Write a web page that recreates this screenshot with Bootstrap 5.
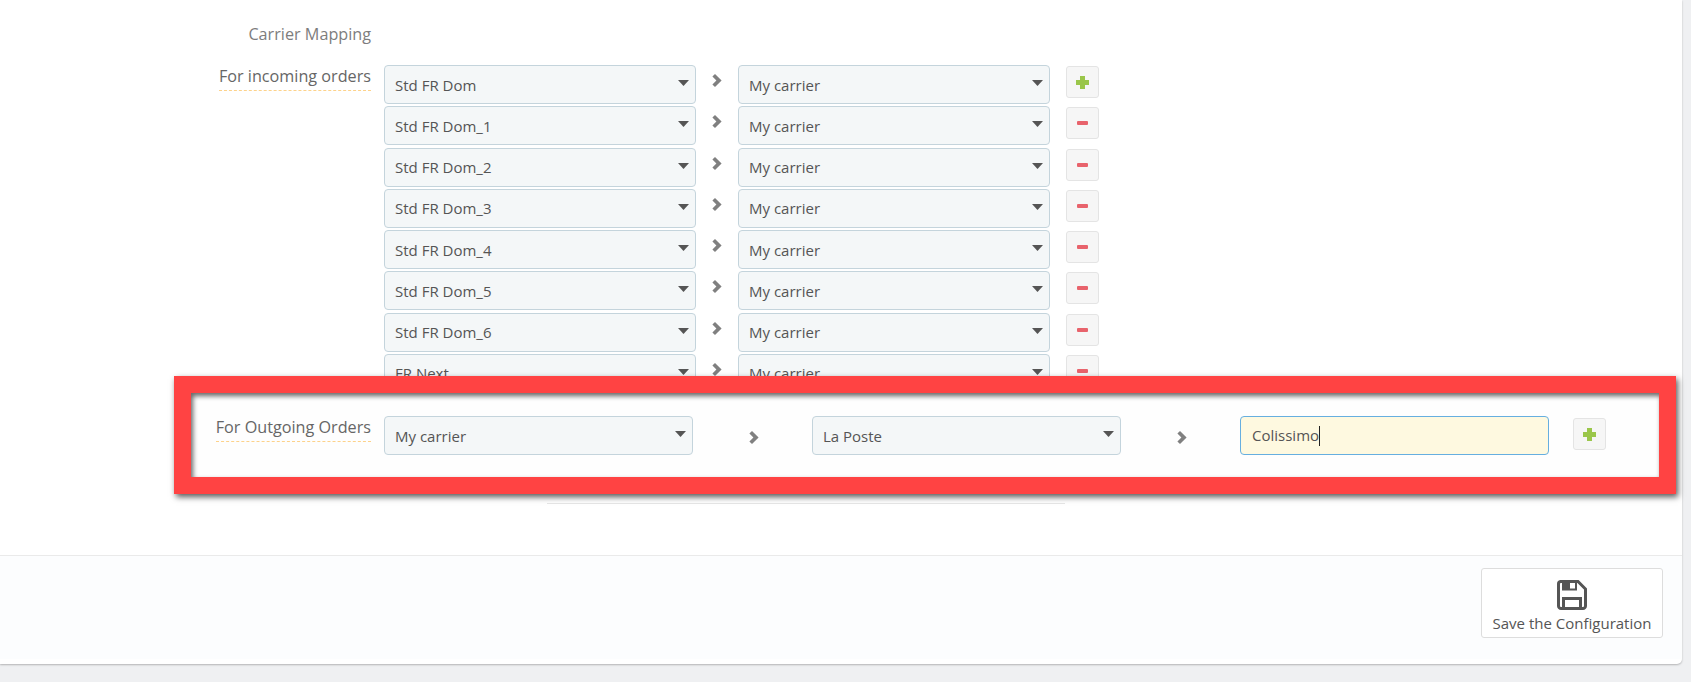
<!DOCTYPE html>
<html lang="en">
<head>
<meta charset="utf-8">
<title>Carrier Mapping</title>
<link href="https://cdn.jsdelivr.net/npm/bootstrap@5.3.0/dist/css/bootstrap.min.css" rel="stylesheet">
<style>
html,body{height:682px;overflow:hidden}
body{background:#eff0f2;font-family:"Open Sans","Noto Sans",sans-serif;font-size:15px;color:#555;position:relative}
.sheet{width:1682px;height:664px;background:#fff;border-bottom-right-radius:5px;box-shadow:0 1px 2px rgba(0,0,0,.25);overflow:hidden;display:flex;flex-direction:column}
.sheet-body{height:555px;padding-top:23px;flex:none}
.head-row{height:42px;display:flex}
.lbl-col{width:371px;text-align:right;flex:none;font-size:16.2px;line-height:20px;padding-top:1px}
.lbl-head{color:#7d7d7d}
.lbl-help{color:#666;border-bottom:1px dashed #fdd28a;padding-bottom:4px;display:inline-block}
.map-row{height:41.28px;display:flex;align-items:flex-start}
.map-list{padding-left:13px;flex:none}
.sel{height:39px;width:312px;border:1px solid #c4d4dc;border-radius:4px;background-color:#f4f7f8;background-image:url("data:image/svg+xml,%3Csvg xmlns='http://www.w3.org/2000/svg' width='11' height='6'%3E%3Cpath d='M0 0h11L5.500 6z' fill='%23555'/%3E%3C/svg%3E");background-repeat:no-repeat;background-position:right 6px top 14px;background-size:11px 6px;color:#555;font-size:15px;padding:0 20px 0 10px;box-shadow:none;font-family:inherit;line-height:20px;-webkit-appearance:none;appearance:none}
.sel:focus{box-shadow:none;outline:0}
.chev{width:42px;flex:none;display:flex;justify-content:center;padding-top:9px;padding-right:1px}
.chev svg,.tool svg{display:block}
.tool{width:33px;height:32px;background:#f6f6f6;border:1px solid #e4e4e4;border-radius:3px;margin-left:16px;margin-top:1px;padding:0;display:flex;align-items:center;justify-content:center;flex:none}
.rule-line{height:1px;background:#e6e6e6;width:518px;margin-left:547px}
.rule-wrap{padding-top:108px}
.sheet-foot{height:91px;flex:none;background:#fcfdfe;border-top:1px solid #eaeaea;display:flex;justify-content:flex-end;padding:12px 19px 0 0;box-sizing:content-box}
.save-btn{width:182px;height:70px;background:#fff;border:1px solid #ddd;border-radius:3px;display:flex;flex-direction:column;align-items:center;font-size:15px;color:#555;line-height:20px;padding:11px 0 0}
.save-btn svg{display:block;margin-bottom:3px}
.callout{position:absolute;left:174px;top:376px;width:1502px;height:118px;border:17px solid #ff4343;background:#fefefe;box-shadow:2px 3px 6px rgba(0,0,0,.65),inset 2px 3px 5px rgba(0,0,0,.6);display:flex;align-items:flex-start;padding-top:23px}
.lbl-out{width:180px;flex:none;text-align:right;font-size:16.2px;line-height:20px;color:#666;padding-top:1px}
.lbl-out span{border-bottom:1px dashed #fdd28a;padding-bottom:4px;display:inline-block}
.callout .sel-o{width:309px;margin-left:13px}
.callout .sel-p{width:309px}
.gap-w{width:119px;flex:none;display:flex;justify-content:center;padding:15px 0 0 3px}
.txt-in{height:39px;width:309px;border:1px solid #66afe0;border-radius:4px;background:#fef9e0;color:#555;font-size:15px;padding:0 11px;display:flex;align-items:center}
.caret-bar{display:inline-block;width:1px;height:20px;background:#222;flex:none}
.callout .tool{margin-left:24px;margin-top:2px}
</style>
</head>
<body>
<div class="sheet">
  <div class="sheet-body">
    <div class="head-row"><div class="lbl-col lbl-head">Carrier Mapping</div></div>
    <div class="d-flex">
      <div class="lbl-col"><span class="lbl-help">For incoming orders</span></div>
      <div class="map-list">
        <div class="map-row"><select class="sel"><option>Std FR Dom</option></select><div class="chev"><svg width="10" height="13" viewBox="0 0 10 13"><path d="M3 0 9.600 6.500 3 13 .4 10.400 4.400 6.500.4 2.600z" fill="#808080"/></svg></div><select class="sel"><option>My carrier</option></select><button class="tool" type="button" aria-label="Add"><svg width="13" height="13" viewBox="0 0 13 13"><path d="M4 0h5v4h4v5H9v4H4V9H0V4h4z" fill="#9ac64a"/></svg></button></div>
        <div class="map-row"><select class="sel"><option>Std FR Dom_1</option></select><div class="chev"><svg width="10" height="13" viewBox="0 0 10 13"><path d="M3 0 9.600 6.500 3 13 .4 10.400 4.400 6.500.4 2.600z" fill="#808080"/></svg></div><select class="sel"><option>My carrier</option></select><button class="tool" type="button" aria-label="Remove"><svg width="11" height="4" viewBox="0 0 11 4"><rect width="11" height="4" rx="1" fill="#e8636c"/></svg></button></div>
        <div class="map-row"><select class="sel"><option>Std FR Dom_2</option></select><div class="chev"><svg width="10" height="13" viewBox="0 0 10 13"><path d="M3 0 9.600 6.500 3 13 .4 10.400 4.400 6.500.4 2.600z" fill="#808080"/></svg></div><select class="sel"><option>My carrier</option></select><button class="tool" type="button" aria-label="Remove"><svg width="11" height="4" viewBox="0 0 11 4"><rect width="11" height="4" rx="1" fill="#e8636c"/></svg></button></div>
        <div class="map-row"><select class="sel"><option>Std FR Dom_3</option></select><div class="chev"><svg width="10" height="13" viewBox="0 0 10 13"><path d="M3 0 9.600 6.500 3 13 .4 10.400 4.400 6.500.4 2.600z" fill="#808080"/></svg></div><select class="sel"><option>My carrier</option></select><button class="tool" type="button" aria-label="Remove"><svg width="11" height="4" viewBox="0 0 11 4"><rect width="11" height="4" rx="1" fill="#e8636c"/></svg></button></div>
        <div class="map-row"><select class="sel"><option>Std FR Dom_4</option></select><div class="chev"><svg width="10" height="13" viewBox="0 0 10 13"><path d="M3 0 9.600 6.500 3 13 .4 10.400 4.400 6.500.4 2.600z" fill="#808080"/></svg></div><select class="sel"><option>My carrier</option></select><button class="tool" type="button" aria-label="Remove"><svg width="11" height="4" viewBox="0 0 11 4"><rect width="11" height="4" rx="1" fill="#e8636c"/></svg></button></div>
        <div class="map-row"><select class="sel"><option>Std FR Dom_5</option></select><div class="chev"><svg width="10" height="13" viewBox="0 0 10 13"><path d="M3 0 9.600 6.500 3 13 .4 10.400 4.400 6.500.4 2.600z" fill="#808080"/></svg></div><select class="sel"><option>My carrier</option></select><button class="tool" type="button" aria-label="Remove"><svg width="11" height="4" viewBox="0 0 11 4"><rect width="11" height="4" rx="1" fill="#e8636c"/></svg></button></div>
        <div class="map-row"><select class="sel"><option>Std FR Dom_6</option></select><div class="chev"><svg width="10" height="13" viewBox="0 0 10 13"><path d="M3 0 9.600 6.500 3 13 .4 10.400 4.400 6.500.4 2.600z" fill="#808080"/></svg></div><select class="sel"><option>My carrier</option></select><button class="tool" type="button" aria-label="Remove"><svg width="11" height="4" viewBox="0 0 11 4"><rect width="11" height="4" rx="1" fill="#e8636c"/></svg></button></div>
        <div class="map-row"><select class="sel"><option>FR Next</option></select><div class="chev"><svg width="10" height="13" viewBox="0 0 10 13"><path d="M3 0 9.600 6.500 3 13 .4 10.400 4.400 6.500.4 2.600z" fill="#808080"/></svg></div><select class="sel"><option>My carrier</option></select><button class="tool" type="button" aria-label="Remove"><svg width="11" height="4" viewBox="0 0 11 4"><rect width="11" height="4" rx="1" fill="#e8636c"/></svg></button></div>
      </div>
    </div>
    <div class="rule-wrap"><div class="rule-line"></div></div>
  </div>
  <div class="sheet-foot">
    <button class="save-btn" type="button"><svg width="30" height="30" viewBox="0 0 30 30"><path d="M3.500 1.500H21L28.500 9V26a2.500 2.500 0 0 1-2.500 2.500H4A2.500 2.500 0 0 1 1.500 26V4A2.500 2.500 0 0 1 3.500 1.500Z" fill="none" stroke="#555" stroke-width="3"/><path d="M5 2h15v8.500H5z" fill="#555"/><path d="M13 3h5v5.500h-5z" fill="#fff"/><path d="M6.500 28V18.500h17V28" fill="none" stroke="#555" stroke-width="3"/></svg>Save the Configuration</button>
  </div>
</div>
<div class="callout">
  <div class="lbl-out"><span>For Outgoing Orders</span></div>
  <select class="sel sel-o"><option>My carrier</option></select>
  <div class="gap-w"><svg width="10" height="13" viewBox="0 0 10 13"><path d="M3 0 9.600 6.500 3 13 .4 10.400 4.400 6.500.4 2.600z" fill="#808080"/></svg></div>
  <select class="sel sel-p"><option>La Poste</option></select>
  <div class="gap-w"><svg width="10" height="13" viewBox="0 0 10 13"><path d="M3 0 9.600 6.500 3 13 .4 10.400 4.400 6.500.4 2.600z" fill="#808080"/></svg></div>
  <div class="txt-in"><span>Colissimo</span><span class="caret-bar"></span></div>
  <button class="tool" type="button" aria-label="Add"><svg width="13" height="13" viewBox="0 0 13 13"><path d="M4 0h5v4h4v5H9v4H4V9H0V4h4z" fill="#9ac64a"/></svg></button>
</div>
<script src="https://cdn.jsdelivr.net/npm/bootstrap@5.3.0/dist/js/bootstrap.bundle.min.js"></script>
</body>
</html>
